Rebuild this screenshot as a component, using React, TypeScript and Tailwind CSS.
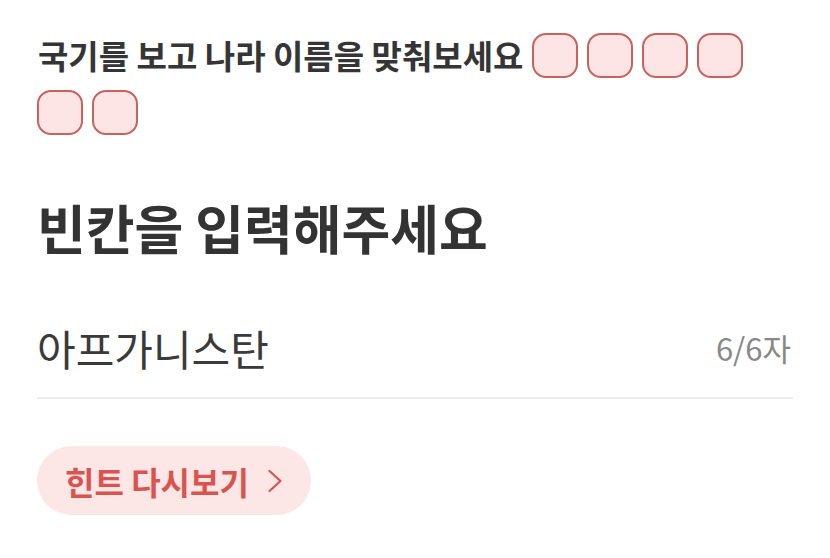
import React from "react";

const Box = () => (
  <div className="w-[46px] h-[45px] rounded-[14px] border-[2.5px] border-[#c9625c] bg-[#fde5e5] box-border" />
);

export default function App() {
  return (
    <div className="w-[830px] h-[558px] bg-white px-[37px] pt-[33px] font-['Noto_Sans_CJK_KR',sans-serif] overflow-hidden">
      <div className="flex flex-wrap items-center gap-x-[9px] gap-y-[12px]">
        <span className="text-[33px] font-bold text-[#353535] leading-[45px] pl-[1px]">
          국기를 보고 나라 이름을 맞춰보세요
        </span>
        <Box />
        <Box />
        <Box />
        <Box />
        <Box />
        <Box />
      </div>
      <h1 className="mt-[60px] text-[53px] font-bold text-[#333333] leading-[64px]">
        빈칸을 입력해주세요
      </h1>
      <div className="mt-[65px] flex items-center justify-between border-b-2 border-[#ececec] pb-[25px]">
        <span className="text-[42px] text-[#3a3a3a] leading-[48px]">아프가니스탄</span>
        <span className="text-[31px] text-[#888888] leading-[48px] pr-[2px]">6/6자</span>
      </div>
      <button className="mt-[47px] flex items-center h-[69px] pl-[28px] pr-[28px] rounded-full bg-[#fde6e6]">
        <span className="text-[32px] font-bold text-[#d9544f] leading-none">힌트 다시보기</span>
        <svg className="ml-[18px]" width="16" height="24" viewBox="0 0 16 24" fill="none">
          <path d="M2.5 2 L13.5 12 L2.5 22" stroke="#d9544f" strokeWidth="2.2" strokeLinecap="round" strokeLinejoin="round" />
        </svg>
      </button>
    </div>
  );
}
